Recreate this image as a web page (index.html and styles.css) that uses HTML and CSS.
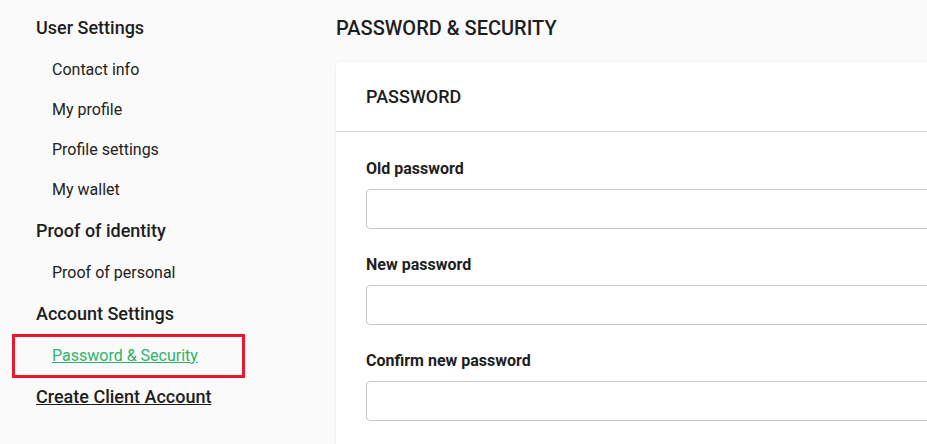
FILE: index.html
```html
<!DOCTYPE html>
<html>
<head>
<meta charset="utf-8">
<link rel="stylesheet" href="styles.css">
</head>
<body>
<div class="page">
  <nav class="sidebar">
    <div class="nav-head">User Settings</div>
    <div class="nav-sub">Contact info</div>
    <div class="nav-sub">My profile</div>
    <div class="nav-sub">Profile settings</div>
    <div class="nav-sub">My wallet</div>
    <div class="nav-head">Proof of identity</div>
    <div class="nav-sub">Proof of personal</div>
    <div class="nav-head">Account Settings</div>
    <div class="nav-sub active"><a class="link-active" href="#">Password &amp; Security</a></div>
    <div class="nav-head"><a class="link-dark" href="#">Create Client Account</a></div>
  </nav>
  <main class="main">
    <h1 class="title">PASSWORD &amp; SECURITY</h1>
    <section class="card">
      <div class="card-head">PASSWORD</div>
      <div class="card-body">
        <label class="label">Old password</label>
        <input class="input" type="password">
        <label class="label">New password</label>
        <input class="input" type="password">
        <label class="label">Confirm new password</label>
        <input class="input" type="password">
      </div>
    </section>
  </main>
</div>
</body>
</html>
```

FILE: styles.css
```css
html, body {
  margin: 0;
  padding: 0;
  background: #fafafa;
  overflow: hidden;
  height: 444px;
}
body {
  font-family: Roboto, "Liberation Sans", sans-serif;
  color: #212121;
}
.page {
  display: flex;
  width: 927px;
  height: 444px;
  overflow: hidden;
}
.sidebar {
  width: 300px;
  flex: 0 0 300px;
  padding: 6px 0 0 36px;
  display: flex;
  flex-direction: column;
}
.nav-head {
  height: 43px;
  display: flex;
  align-items: center;
  font-size: 18px;
  font-weight: 500;
  color: #1e1e1e;
}
.nav-sub {
  height: 40px;
  display: flex;
  align-items: center;
  padding-left: 16px;
  font-size: 16px;
  color: #222;
}
.active {
  position: relative;
}
.active::after {
  content: "";
  position: absolute;
  left: -24px;
  top: -1px;
  width: 227px;
  height: 38px;
  border: 3px solid #e8192c;
}
.link-active {
  color: #2db36a;
  text-decoration: underline;
}
.link-dark {
  color: #1e1e1e;
  text-decoration: underline;
}
.main {
  flex: 1 1 auto;
  min-width: 0;
}
.title {
  margin: 0;
  display: flex;
  align-items: center;
  font-size: 20px;
  font-weight: 500;
  color: #1e1e1e;
  padding-bottom: 7px;
  box-sizing: border-box;
  height: 62px;
}
.card {
  width: 760px;
  background: #fff;
  border-radius: 4px;
  box-shadow: 0 0 3px rgba(0, 0, 0, 0.08);
}
.card-head {
  height: 70px;
  box-sizing: border-box;
  border-bottom: 1px solid #d4d4d4;
  padding-left: 30px;
  display: flex;
  align-items: center;
  font-size: 18px;
  font-weight: 500;
  color: #1e1e1e;
}
.card-body {
  padding: 27px 30px 30px;
  display: flex;
  flex-direction: column;
}
.label {
  font-size: 16px;
  font-weight: 700;
  line-height: 20px;
  color: #1e1e1e;
  margin-bottom: 10px;
}
.input {
  height: 40px;
  box-sizing: border-box;
  border: 1px solid #c8c8c8;
  border-radius: 4px;
  background: #fff;
  margin: 0 0 26px;
  width: 100%;
}
```
